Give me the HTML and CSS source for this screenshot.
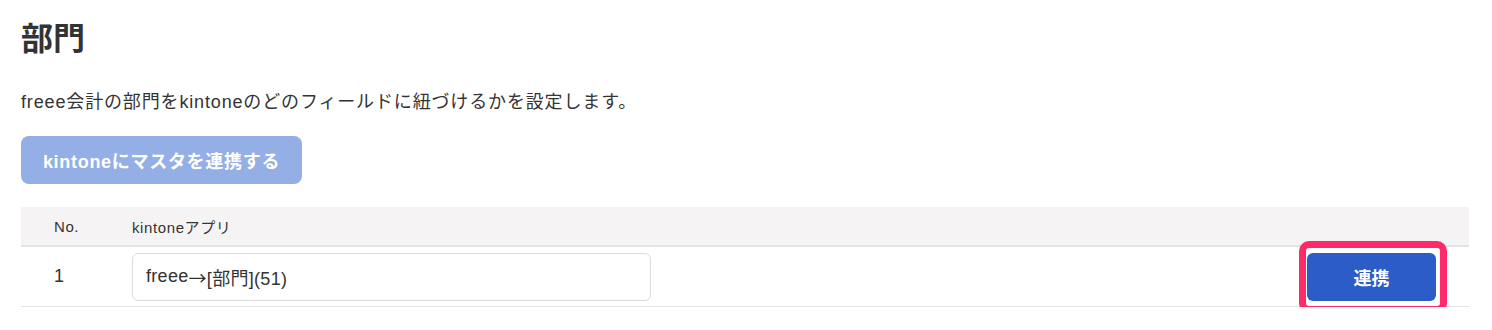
FILE: index.html
```html
<!DOCTYPE html>
<html lang="ja">
<head>
    <meta charset="UTF-8">
    <title>部門</title>
    <link rel="stylesheet" href="styles.css">
</head>
<body>
    <div class="page">
        <h1 class="title">部門</h1>
        <p class="lead">freee会計の部門をkintoneのどのフィールドに紐づけるかを設定します。</p>
        <button class="btn-sync" disabled>kintoneにマスタを連携する</button>

        <div class="table">
            <div class="row head">
                <div class="col-no">No.</div>
                <div class="col-app">kintoneアプリ</div>
                <div class="col-action"></div>
            </div>
            <div class="row">
                <div class="col-no">1</div>
                <div class="col-app">
                    <div class="field">freee<span class="arrow">→</span>[部門](51)</div>
                </div>
                <div class="col-action">
                    <span class="highlight">
                        <button class="btn-link">連携</button>
                    </span>
                </div>
            </div>
        </div>
    </div>
</body>
</html>
```

FILE: styles.css
```css
* {
    box-sizing: border-box;
}
body {
    margin: 0;
    background: #fff;
    color: #333;
    font-family: "Liberation Sans", Arial, "Noto Sans CJK JP", sans-serif;
}
.page {
    padding: 12px 23px 0 21px;
}
.title {
    margin: 0;
    font-family: "Noto Sans CJK JP", sans-serif;
    font-size: 32px;
    font-weight: bold;
    line-height: 48px;
}
.lead {
    margin: 29px 0 0;
    font-size: 18px;
    letter-spacing: 0.85px;
    line-height: 26px;
}
.btn-sync {
    margin-top: 21px;
    width: 281px;
    height: 48px;
    border: none;
    border-radius: 8px;
    background: #94aee6;
    color: #fff;
    font-family: "Liberation Sans", Arial, "Noto Sans CJK JP", sans-serif;
    font-size: 18px;
    font-weight: bold;
    letter-spacing: 0.7px;
}
.table {
    margin-top: 23px;
}
.row {
    display: flex;
    align-items: center;
    height: 60px;
    border-bottom: 1px solid #e3e3e3;
    font-size: 18px;
}
.row.head {
    height: 40px;
    background: #f5f3f4;
    border-bottom: 2px solid #e3e3e3;
    font-size: 15px;
    letter-spacing: 0.6px;
}
.col-no {
    width: 111px;
    padding-left: 33px;
}
.col-app {
    width: 519px;
}
.col-action {
    flex: 1;
    display: flex;
    justify-content: flex-end;
    padding-right: 33px;
}
.field {
    height: 48px;
    padding: 0 13px;
    display: flex;
    align-items: center;
    border: 1px solid #dcdcdc;
    border-radius: 6px;
    letter-spacing: 0.3px;
}
.arrow {
    font-family: "Noto Sans CJK JP", sans-serif;
}
.highlight {
    position: relative;
    display: block;
}
.highlight::after {
    content: "";
    position: absolute;
    left: -8px;
    right: -11px;
    top: -12px;
    bottom: -12px;
    border: 7px solid #ff2a6a;
    border-radius: 10px;
}
.btn-link {
    display: block;
    width: 129px;
    height: 48px;
    border: none;
    border-radius: 6px;
    background: #2b5cc8;
    color: #fff;
    font-family: "Noto Sans CJK JP", sans-serif;
    font-size: 18px;
    font-weight: bold;
}
```
